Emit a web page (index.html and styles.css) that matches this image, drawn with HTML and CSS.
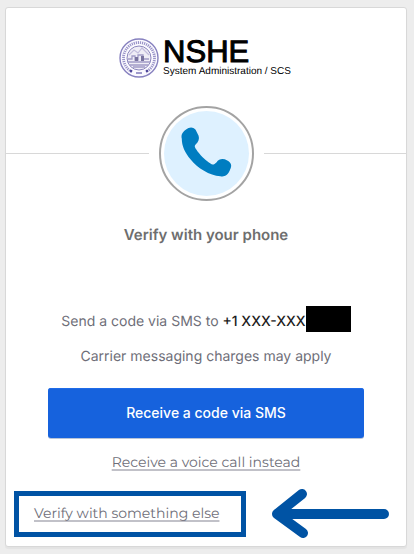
FILE: index.html
```html
<!DOCTYPE html>
<html lang="en">
<head>
<meta charset="utf-8">
<meta name="viewport" content="width=device-width, initial-scale=1">
<title>Verify with your phone</title>
<link rel="stylesheet" href="styles.css">
</head>
<body>
<main class="card">
  <header class="brand">
    <svg class="seal" viewBox="0 0 40 40" aria-hidden="true">
      <circle cx="20" cy="20" r="19" fill="#fbfaff" stroke="#8781bf" stroke-width="1.4"/>
      <circle cx="20" cy="20" r="15.500" fill="none" stroke="#9a94c8" stroke-width="2.800" stroke-dasharray="1.2 .9"/>
      <circle cx="20" cy="20" r="12" fill="#efedf6" stroke="#8c86bd" stroke-width="1"/>
      <path d="M10 17l5-5 4 3 4-5 7 7" fill="none" stroke="#c3bedd" stroke-width="1.2"/>
      <path d="M9 21h4v-3h3v4h3v-5h5v4h6M9 24h22M11 27h18M14 29h12" fill="none" stroke="#a19bc6" stroke-width="1.3"/>
      <path d="M16 19h3v4h-3zM22 18h3v5h-3z" fill="#79739f"/>
      <path d="M13 33h14v4H13z" fill="#fbfaff"/>
      <path d="M17 35h6" stroke="#8781bf" stroke-width="1.6"/>
      <circle cx="12" cy="33" r="1.300" fill="#51489b"/>
      <circle cx="28" cy="33" r="1.300" fill="#51489b"/>
    </svg>
    <div class="brand-text">
      <span class="brand-name">NSHE</span>
      <span class="brand-unit">System Administration / SCS</span>
    </div>
  </header>

  <div class="divider">
    <div class="badge">
      <svg class="phone" viewBox="0 0 86 86" aria-hidden="true">
        <path d="M18 28C17 24 19 21 22 19C26 16 29 16 32 19L35 25C36 28 35 31 32 34C30 36 32 38 34 41C38 46 43 51 47 53C49 55 51 54 53 52C56 48 60 48 64 50C68 52 69 55 67 59C65 65 61 67 57 66C46 65 34 58 27 49C21 42 18 35 18 28Z" fill="#007dc1"/>
      </svg>
    </div>
  </div>

  <h1 class="title">Verify with your phone</h1>

  <form class="form">
    <p class="note">Send a code via SMS to <strong class="number">+1 XXX-XXX</strong><span class="redacted"></span></p>
    <p class="note">Carrier messaging charges may apply</p>
    <button class="submit" type="button">Receive a code via SMS</button>
    <a class="link" href="#voice">Receive a voice call instead</a>
  </form>

  <div class="callout">
    <div class="callout-box"><a class="link" href="#factors">Verify with something else</a></div>
    <svg class="arrow" viewBox="0 0 120 52" aria-hidden="true">
      <path d="M8 26H115M33 6L8 26L34 45" fill="none" stroke="#0053a4" stroke-width="10" stroke-linecap="round" stroke-linejoin="round"/>
    </svg>
  </div>
</main>
</body>
</html>
```
FILE: styles.css
```css
* {
  box-sizing: border-box;
}

body {
  margin: 0;
  padding: 7px 7px 7px 5px;
  background: #ededed;
  color: #6e6e78;
  font-family: Inter, sans-serif;
  font-size: 14px;
  line-height: 20px;
  text-rendering: geometricPrecision;
}

.card {
  max-width: 402px;
  margin: 0 auto;
  padding: 30px 0 6px;
  background: #fff;
  border: 1px solid #d8d8d8;
  border-radius: 3px;
  box-shadow: 0 2px 1px rgba(0, 0, 0, 0.04);
}

.brand {
  display: flex;
  justify-content: center;
  gap: 4px;
  padding-right: 2px;
}

.seal {
  width: 40px;
  height: 40px;
}

.brand-text {
  display: flex;
  flex-direction: column;
  color: #000;
  font-family: "Liberation Sans", Arial, sans-serif;
}

.brand-name {
  font-size: 31px;
  line-height: 28px;
  -webkit-text-stroke: 1px #000;
}

.brand-unit {
  font-size: 10px;
  line-height: 12px;
}

.divider {
  display: flex;
  align-items: center;
  gap: 10px;
  margin-top: 28px;
}

.divider::before,
.divider::after {
  content: "";
  flex: 1;
  border-top: 1px solid #d8d8d8;
}

.badge {
  width: 95px;
  height: 95px;
  padding: 3px;
  border: 2px solid #a3a3a3;
  border-radius: 50%;
}

.phone {
  display: block;
  width: 85px;
  height: 85px;
  background: #def1ff;
  border-radius: 50%;
}

.title {
  margin: 24px 0 0;
  color: #6e6e6e;
  font-size: 15px;
  font-weight: 600;
  line-height: 20px;
  text-align: center;
}

.form {
  display: flex;
  flex-direction: column;
  align-items: center;
  margin: 61px 42px 0;
}

.note {
  display: flex;
  align-items: flex-end;
  min-height: 26px;
  margin: 0 0 9px;
  white-space: pre;
}

.number {
  color: #1d1d21;
  font-weight: 500;
}

.redacted {
  width: 45px;
  height: 26px;
  background: #000;
}

.submit {
  width: 100%;
  height: 50px;
  margin: 12px 0 14px;
  padding: 0;
  border: 0;
  border-radius: 3px;
  background: #1662dd;
  box-shadow: inset 0 1px #1f6be8, 0 1px #b8c4d8;
  color: #fff;
  font: 500 14px/20px Inter, sans-serif;
}

.link {
  color: #6e6e78;
  font-family: Montserrat, Inter, sans-serif;
  text-decoration: underline #c1c1c8 2px;
  text-underline-offset: 2px;
  text-decoration-skip-ink: none;
}

.callout {
  display: flex;
  align-items: center;
  gap: 23px;
  margin: 16px 0 0 8px;
}

.callout-box {
  width: 232px;
  padding: 7px 14px 8px 15px;
  border: 5px solid #0053a4;
  white-space: nowrap;
}

.arrow {
  width: 120px;
  height: 52px;
}
```
